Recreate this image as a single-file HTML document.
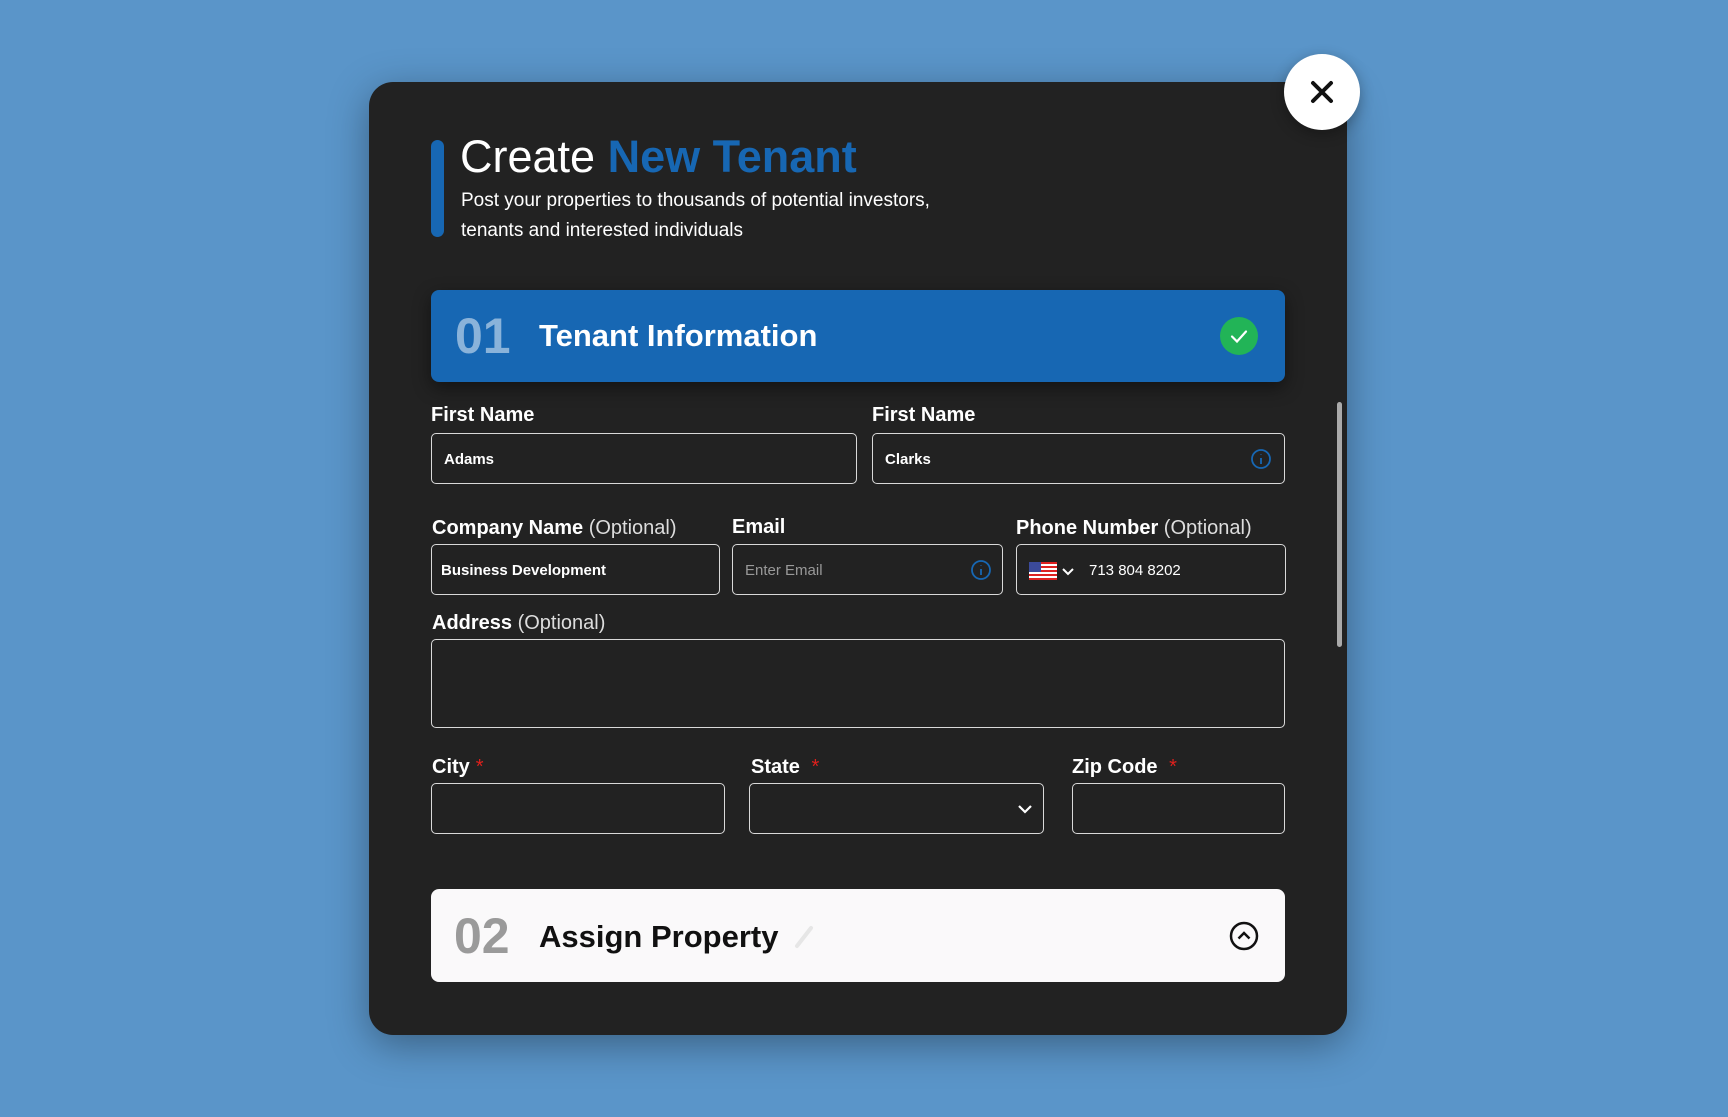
<!DOCTYPE html>
<html><head><meta charset="utf-8"><style>
*{box-sizing:border-box;margin:0;padding:0}
body{width:1728px;height:1117px;background:#5a95c9;font-family:"Liberation Sans",sans-serif;position:relative;overflow:hidden}
.modal{position:absolute;left:369px;top:82px;width:978px;height:953px;background:#222;border-radius:24px;box-shadow:0 10px 40px rgba(0,0,0,.35)}
.abs{position:absolute}
.close{left:1284px;top:54px;width:76px;height:76px;border-radius:50%;background:#fff;box-shadow:0 4px 14px rgba(0,0,0,.3)}
.lbl{position:absolute;color:#fff;font-size:20px;font-weight:bold}
.lbl span{font-weight:normal;color:#ddd}
.lbl i{font-style:normal;color:#e0201c;font-weight:normal;margin-left:6px}
.inp{position:absolute;border:1.5px solid #d9d9d9;border-radius:5px;color:#fff;font-size:15px;padding-left:12px;padding-top:2px;display:flex;align-items:center;font-weight:bold}
</style></head><body>
<div class="modal"></div>
<div class="abs close"><svg width="76" height="76"><path d="M29 29L47 47M47 29L29 47" stroke="#111" stroke-width="4" stroke-linecap="round"/></svg></div>
<div class="abs" style="left:431px;top:140px;width:13px;height:97px;background:#1767b3;border-radius:7px"></div>
<div class="abs" style="left:460px;top:129px;font-size:45px;color:#fff;line-height:56px">Create <b style="color:#1767b3">New Tenant</b></div>
<div class="abs" style="left:461px;top:186px;font-size:19px;color:#fff;line-height:30px">Post your properties to thousands of potential investors,<br>tenants and interested individuals</div>
<div class="abs" style="left:431px;top:290px;width:854px;height:92px;background:#1767b3;border-radius:8px;box-shadow:0 6px 18px rgba(0,0,0,.45)"></div>
<div class="abs" style="left:455px;top:306px;font-size:50px;font-weight:bold;color:#8ab3da;line-height:60px">01</div>
<div class="abs" style="left:539px;top:318px;font-size:31px;font-weight:bold;color:#fff;line-height:36px">Tenant Information</div>
<div class="abs" style="left:1220px;top:317px;width:38px;height:38px;border-radius:50%;background:#22b457"><svg width="38" height="38"><path d="M12 19.5l5 5 9-10" stroke="#fff" stroke-width="2.2" fill="none" stroke-linecap="round"/></svg></div>
<div class="lbl" style="left:431px;top:404px">First Name</div>
<div class="lbl" style="left:872px;top:404px">First Name</div>
<div class="inp" style="left:431px;top:433px;width:426px;height:51px">Adams</div>
<div class="inp" style="left:872px;top:433px;width:413px;height:51px">Clarks<svg class="abs" style="right:12px;top:14px" width="22" height="22"><circle cx="11" cy="11" r="9" stroke="#1767b3" stroke-width="1.8" fill="none"/><path d="M11 10v6M11 6.5v.5" stroke="#1767b3" stroke-width="1.8"/></svg></div>
<div class="lbl" style="left:432px;top:517px">Company Name <span>(Optional)</span></div>
<div class="lbl" style="left:732px;top:516px">Email</div>
<div class="lbl" style="left:1016px;top:517px">Phone Number <span>(Optional)</span></div>
<div class="inp" style="left:431px;top:544px;width:289px;height:51px;padding-left:9px">Business Development</div>
<div class="inp" style="left:732px;top:544px;width:271px;height:51px;color:#999;font-weight:normal">Enter Email<svg class="abs" style="right:10px;top:14px" width="22" height="22"><circle cx="11" cy="11" r="9" stroke="#1767b3" stroke-width="1.8" fill="none"/><path d="M11 10v6M11 6.5v.5" stroke="#1767b3" stroke-width="1.8"/></svg></div>
<div class="inp" style="left:1016px;top:544px;width:270px;height:51px;padding-left:12px;font-weight:normal">
<svg width="28" height="18"><rect width="28" height="18" fill="#fff"/><g fill="#d22"><rect y="0" width="28" height="2"/><rect y="4" width="28" height="2"/><rect y="8" width="28" height="2"/><rect y="12" width="28" height="2"/><rect y="16" width="28" height="2"/></g><rect width="12" height="10" fill="#3b4a9a"/></svg>
<svg width="22" height="18"><path d="M6 7l5 5 5-5" stroke="#fff" stroke-width="2" fill="none"/></svg>
<span style="margin-left:10px">713 804 8202</span></div>
<div class="lbl" style="left:432px;top:612px">Address <span>(Optional)</span></div>
<div class="inp" style="left:431px;top:639px;width:854px;height:89px"></div>
<div class="lbl" style="left:432px;top:756px">City<i>*</i></div>
<div class="lbl" style="left:751px;top:756px">State <i>*</i></div>
<div class="lbl" style="left:1072px;top:756px">Zip Code <i>*</i></div>
<div class="inp" style="left:431px;top:783px;width:294px;height:51px"></div>
<div class="inp" style="left:749px;top:783px;width:295px;height:51px"><svg class="abs" style="right:8px;top:15px" width="20" height="20"><path d="M4 7l6 6 6-6" stroke="#fff" stroke-width="2.2" fill="none"/></svg></div>
<div class="inp" style="left:1072px;top:783px;width:213px;height:51px"></div>
<div class="abs" style="left:431px;top:889px;width:854px;height:93px;background:#faf9fa;border-radius:8px"></div>
<div class="abs" style="left:454px;top:906px;font-size:50px;font-weight:bold;color:#9a9a9a;line-height:60px">02</div>
<div class="abs" style="left:539px;top:919px;font-size:31px;font-weight:bold;color:#111;line-height:36px">Assign Property</div>
<svg class="abs" style="left:793px;top:924px" width="24" height="26"><path d="M4 22L18 4" stroke="#e6e6e6" stroke-width="4" stroke-linecap="round"/></svg>
<svg class="abs" style="left:1228px;top:920px" width="32" height="32"><circle cx="16" cy="16" r="13" stroke="#111" stroke-width="2.5" fill="none"/><path d="M10.5 18.5l5.5-5.5 5.5 5.5" stroke="#111" stroke-width="2.5" fill="none"/></svg>
<div class="abs" style="left:1337px;top:402px;width:5px;height:245px;background:#aaa;border-radius:3px"></div>
</body></html>
